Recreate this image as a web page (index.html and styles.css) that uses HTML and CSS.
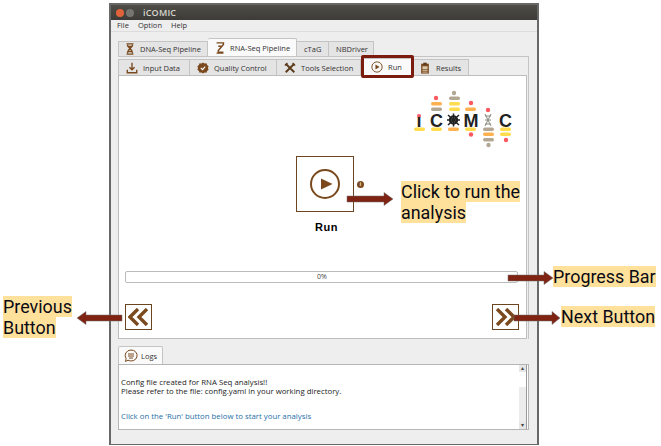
FILE: index.html
```html
<!DOCTYPE html>
<html lang="en">
<head>
    <meta charset="utf-8">
    <title>ICOMIC</title>
    <link rel="stylesheet" href="styles.css">
</head>
<body>
<div class="window">
    <div class="titlebar">
        <span class="dot close"></span>
        <span class="dot min"></span>
        <span class="title">iCOMIC</span>
    </div>
    <div class="menu"><span>File</span><span>Option</span><span>Help</span></div>
    <div class="content">
        <div class="tabs top-tabs">
            <div class="tab dna">
                <svg class="ico" viewBox="0 0 14 14"><path d="M3 1h8M3 13h8M4 2c0 4 6 4 6 10M10 2c0 4-6 4-6 10M5 4h4M5 10h4" fill="none" stroke="#7a4a1e" stroke-width="1.7"/></svg>
                DNA-Seq Pipeline
            </div>
            <div class="tab active rna">
                <svg class="ico" viewBox="0 0 14 14"><path d="M3 1h8v2L5 10v2h6M3 13h8M5 5h5" fill="none" stroke="#7a4a1e" stroke-width="1.7"/></svg>
                RNA-Seq Pipeline
            </div>
            <div class="tab ctag">cTaG</div>
            <div class="tab nbd">NBDriver</div>
        </div>
        <div class="pane">
            <div class="tabs inner-tabs">
                <div class="tab input">
                    <svg class="ico" viewBox="0 0 14 14"><path d="M7 1v8M4 6l3 3 3-3M1.500 9v3.500h11V9" fill="none" stroke="#7a4a1e" stroke-width="1.600"/></svg>
                    Input Data
                </div>
                <div class="tab quality">
                    <svg class="ico" viewBox="0 0 14 14"><path d="M7 .5l1.800 1.200 2.200-.2.800 2 1.700 1.400-.7 2.100.7 2.100-1.700 1.400-.8 2-2.200-.2L7 13.500l-1.800-1.200-2.200.2-.8-2L.5 9.100 1.200 7 .5 4.900l1.700-1.400.8-2 2.200.2z" fill="#7a4a1e"/><path d="M4.500 7l2 2 3-3.500" fill="none" stroke="#fff" stroke-width="1.300"/></svg>
                    Quality Control
                </div>
                <div class="tab tools">
                    <svg class="ico" viewBox="0 0 14 14"><path d="M2 2l10 10M12 2L2 12" fill="none" stroke="#5b3a1a" stroke-width="2.200"/><path d="M1 4l3-3M10 1l3 3" stroke="#5b3a1a" stroke-width="1.500"/></svg>
                    Tools Selection
                </div>
                <div class="tab active run">
                    <svg class="ico" viewBox="0 0 14 14"><circle cx="7" cy="7" r="6" fill="none" stroke="#7a4a1e" stroke-width="1.100"/><path d="M5.200 4.200L10 7l-4.800 2.800z" fill="#7a4a1e"/></svg>
                    Run
                </div>
                <div class="tab results">
                    <svg class="ico" viewBox="0 0 14 14"><rect x="2.500" y="2" width="9" height="11.500" fill="#7a4a1e"/><rect x="5" y=".8" width="4" height="2.500" fill="#5b3a1a"/><rect x="4" y="5" width="6" height="3.500" fill="#d9c7ae"/><path d="M4 10h6M4 11.800h6" stroke="#d9c7ae"/></svg>
                    Results
                </div>
            </div>
            <div class="run-page">
                <div class="logo-row">
                    <svg class="logo" width="108" height="60" viewBox="410 88 108 60">
                        <g fill="#f9595f">
                            <circle cx="419" cy="116" r="2"/><circle cx="436" cy="98" r="2.200"/>
                            <circle cx="471" cy="103" r="2.200"/><circle cx="471" cy="134.500" r="2.200"/>
                            <circle cx="488" cy="110" r="2.200"/><circle cx="506" cy="140" r="2.200"/>
                        </g>
                        <g fill="#b3a794">
                            <circle cx="454" cy="93" r="2.200"/><circle cx="488.500" cy="145" r="2.200"/>
                            <rect x="449" y="96.500" width="11" height="3.500" rx="1.700"/>
                            <rect x="431" y="107.500" width="11" height="3.500" rx="1.700"/>
                            <rect x="483" y="127.500" width="11" height="3.500" rx="1.700"/>
                            <rect x="483" y="138" width="11" height="3.500" rx="1.700"/>
                        </g>
                        <g fill="#ffb14f">
                            <rect x="431" y="102" width="11" height="3.500" rx="1.700"/>
                            <rect x="465" y="107.500" width="11" height="3.500" rx="1.700"/>
                            <rect x="448" y="127.500" width="11" height="3.500" rx="1.700"/>
                            <rect x="483" y="132.500" width="11" height="3.500" rx="1.700"/>
                        </g>
                        <g fill="#ffdc4d">
                            <rect x="414" y="127.500" width="11" height="3.500" rx="1.700"/>
                            <rect x="431" y="127.500" width="11" height="3.500" rx="1.700"/>
                            <rect x="449" y="102" width="11" height="3.500" rx="1.700"/>
                            <rect x="449" y="107.500" width="11" height="3.500" rx="1.700"/>
                            <rect x="465" y="127.500" width="11" height="3.500" rx="1.700"/>
                            <rect x="500" y="127.500" width="11" height="3.500" rx="1.700"/>
                            <rect x="500" y="132.500" width="11" height="3.500" rx="1.700"/>
                        </g>
                        <text class="logo-text" x="419" y="126.500" text-anchor="middle">ı</text>
                        <text class="logo-text" x="436.500" y="126.500" text-anchor="middle">C</text>
                        <text class="logo-text" x="471" y="126.500" text-anchor="middle">M</text>
                        <text class="logo-text" x="505.500" y="126.500" text-anchor="middle">C</text>
                        <circle cx="453.500" cy="120" r="3.600" fill="none" stroke="#222" stroke-width="2.200"/>
                        <path d="M448 115l11 10M459 115l-11 10M453.500 113.500v13M447 120h13" stroke="#222" stroke-width="1.500"/>
                        <path d="M485 114l6 12M491 114l-6 12M485 116h6M485 120h6M485 124h6" fill="none" stroke="#8a8a80" stroke-width="1"/>
                    </svg>
                </div>
                <div class="run-block">
                    <div class="run-col">
                        <div class="run-btn">
                            <svg width="32" height="32" viewBox="0 0 32 32"><circle cx="16" cy="16" r="14" fill="none" stroke="#7a4a1e" stroke-width="2"/><path d="M12 10.500L23.500 16 12 21.500z" fill="#7a4a1e"/></svg>
                        </div>
                        <div class="run-label">Run</div>
                    </div>
                    <span class="info">i</span>
                </div>
                <div class="progress">0%</div>
                <div class="nav-row">
                    <div class="nav-btn">
                        <svg width="21" height="18" viewBox="0 0 21 18"><path d="M10 1L2 9l8 8M19 1l-8 8 8 8" fill="none" stroke="#7a4a1e" stroke-width="3.400"/></svg>
                    </div>
                    <div class="nav-btn">
                        <svg width="21" height="18" viewBox="0 0 21 18"><path d="M2 1l8 8-8 8M11 1l8 8-8 8" fill="none" stroke="#7a4a1e" stroke-width="3.400"/></svg>
                    </div>
                </div>
            </div>
        </div>
        <div class="tabs log-tabs">
            <div class="tab active logs">
                <svg class="ico" viewBox="0 0 14 14"><path d="M7 1a6 5.500 0 1 1-3 10.200L1.500 12.500l.6-3A6 5.500 0 0 1 7 1z" fill="none" stroke="#7a4a1e"/><path d="M4 5h6M4 7h6M5 9h4" stroke="#7a4a1e"/></svg>
                Logs
            </div>
        </div>
        <div class="log-panel">
            <div class="log-text">
                <p>Config file created for RNA Seq analysis!!</p>
                <p>Please refer to the file: config.yaml in your working directory.</p>
                <p class="log-link">Click on the 'Run' button below to start your analysis</p>
            </div>
            <div class="scrollbar">
                <span class="sb-arrow">&#9652;</span>
                <span class="sb-track"></span>
                <span class="sb-arrow">&#9662;</span>
            </div>
        </div>
    </div>
</div>

<!-- annotations drawn over the screenshot -->
<div class="run-mark"></div>
<svg class="arrows" width="661" height="446" viewBox="0 0 661 446">
    <g fill="#7f2412" stroke="#6d6d6d" stroke-width=".5">
        <path d="M347 196h37v-3.500l9 6.500-9 6.500V202h-37z"/>
        <path d="M122 315H86v-3.500L77 318l9 6.500V321h36z"/>
        <path d="M508 275h36v-3.500l9 6.500-9 6.500V281h-36z"/>
        <path d="M514 315h38v-3.500l8 6.500-8 6.500V321h-38z"/>
    </g>
</svg>
<div class="note note-run"><span>Click to run the</span><span>analysis</span></div>
<div class="note note-progress"><span>Progress Bar</span></div>
<div class="note note-prev"><span>Previous</span><span>Button</span></div>
<div class="note note-next"><span>Next Button</span></div>
</body>
</html>
```

FILE: styles.css
```css
* {
    margin: 0;
    padding: 0;
    box-sizing: border-box;
}
html, body {
    height: 100%;
    overflow: hidden;
}
body {
    background-color: #fff;
    font-family: "Open Sans", "Noto Sans", sans-serif;
    color: #333;
}
.window {
    width: 430px;
    height: 442px;
    margin: 3px 0 0 109px;
    border: 2px solid #686868;
    border-bottom-width: 1px;
    background-color: #eee;
    display: flex;
    flex-direction: column;
}
.titlebar {
    height: 15px;
    background: linear-gradient(#4f4d47, #3c3b37);
    display: flex;
    align-items: center;
    padding-left: 5px;
    gap: 2px;
}
.dot {
    width: 8px;
    height: 8px;
    border-radius: 50%;
}
.close {
    background-color: #e0633a;
}
.min {
    background-color: #77756f;
    margin-right: 7px;
}
.title {
    font-size: 9px;
    font-weight: 600;
    color: #d8d5cd;
    letter-spacing: .2px;
}
.menu {
    height: 12px;
    display: flex;
    gap: 9px;
    padding-left: 6px;
    font-size: 7.500px;
    line-height: 11px;
    color: #333;
    border-bottom: 1px solid #dcdcdc;
}
.content {
    flex: 1;
    padding: 6px 8px 0 7px;
    display: flex;
    flex-direction: column;
}
.tabs {
    display: flex;
}
.top-tabs {
    height: 18px;
    align-items: flex-end;
}
.tab {
    height: 15px;
    display: flex;
    align-items: center;
    gap: 5px;
    font-size: 7.500px;
    color: #333;
    background-color: #e4e4e4;
    border: 1px solid #c4c4c4;
    border-bottom: 0;
    border-left: 0;
    white-space: nowrap;
    padding-left: 7px;
}
.tab.active {
    background-color: #fafafa;
    border-radius: 2px 2px 0 0;
}
.ico {
    width: 12px;
    height: 12px;
    flex: none;
}
.dna {
    width: 90px;
    border-left: 1px solid #c4c4c4;
    padding-left: 5px;
    gap: 4px;
}
.rna {
    width: 89px;
    height: 18px;
    padding-left: 6px;
    gap: 4px;
}
.ctag {
    width: 32px;
}
.nbd {
    width: 45px;
    padding-left: 7px;
}
.pane {
    height: 283px;
    border: 1px solid #c4c4c4;
    border-bottom: 0;
    border-left: 0;
    padding-top: 1px;
    padding-right: 1px;
    display: flex;
    flex-direction: column;
}
.inner-tabs {
    height: 17px;
    align-items: flex-end;
}
.inner-tabs .tab {
    height: 16px;
}
.input {
    width: 72px;
    border-left: 1px solid #c4c4c4;
}
.quality {
    width: 87px;
}
.tools {
    width: 84px;
}
.run {
    width: 53px;
    padding-left: 10px;
}
.inner-tabs .run {
    height: 17px;
}
.results {
    width: 55px;
    padding-left: 5px;
}
.run-page {
    flex: 1;
    background-color: #fff;
    border: 1px solid #bdbdbd;
    padding: 12px 8px 0 6px;
    display: flex;
    flex-direction: column;
}
.logo-row {
    display: flex;
    justify-content: flex-end;
    height: 60px;
}
.logo-text {
    font-family: "Liberation Sans", sans-serif;
    font-size: 18px;
    font-weight: 700;
    fill: #222;
}
.run-block {
    display: flex;
    margin: 8px 0 0 171px;
}
.run-col {
    width: 58px;
}
.run-btn {
    width: 58px;
    height: 56px;
    border: 1px solid #6b4420;
    display: flex;
    align-items: center;
    justify-content: center;
}
.run-label {
    margin-top: 8px;
    height: 14px;
    padding-left: 3px;
    font-family: "Liberation Sans", sans-serif;
    font-size: 11px;
    font-weight: 700;
    letter-spacing: .6px;
    line-height: 14px;
    text-align: center;
    color: #000;
}
.info {
    width: 7px;
    height: 7px;
    margin: 25px 0 0 3px;
    border-radius: 50%;
    background-color: #7a4a1e;
    color: #e8d8c4;
    font-size: 6px;
    font-weight: 700;
    line-height: 7px;
    text-align: center;
}
.progress {
    height: 12px;
    margin-top: 37px;
    border: 1px solid #bbb;
    border-radius: 2px;
    padding-left: 1px;
    font-size: 7px;
    line-height: 10px;
    text-align: center;
    color: #444;
}
.nav-row {
    display: flex;
    justify-content: space-between;
    margin: 21px -1px 0 0;
}
.nav-btn {
    width: 27px;
    height: 26px;
    border: 1px solid #6b4420;
    display: flex;
    align-items: center;
    justify-content: center;
}
.log-tabs {
    height: 18px;
    margin-top: 7px;
}
.logs {
    width: 45px;
    height: 18px;
    border-left: 1px solid #c4c4c4;
    padding-left: 5px;
    gap: 3px;
}
.logs .ico {
    width: 14px;
    height: 14px;
}
.log-panel {
    height: 66px;
    background-color: #fff;
    border: 1px solid #b5b5b5;
    display: flex;
    justify-content: space-between;
}
.log-text {
    padding: 13px 0 0 2px;
    font-size: 7.800px;
    line-height: 8.500px;
    color: #222;
}
.log-link {
    margin-top: 17px;
    color: #1f6fa8;
}
.scrollbar {
    width: 8px;
    margin-right: 1px;
    display: flex;
    flex-direction: column;
    border-right: 1px solid #999;
}
.sb-arrow {
    height: 7px;
    font-size: 6px;
    line-height: 7px;
    text-align: center;
    background-color: #e6e6e6;
    color: #444;
}
.sb-track {
    flex: 1;
    margin-top: 15px;
    background-color: #ececec;
}
.run-mark {
    position: absolute;
    left: 361px;
    top: 55px;
    width: 53px;
    height: 23px;
    border: 3px solid #7b1c0e;
    border-radius: 2px;
}
.arrows {
    position: absolute;
    left: 0;
    top: 0;
}
.note {
    position: absolute;
    display: flex;
    flex-direction: column;
    align-items: flex-start;
    font-family: Roboto, sans-serif;
    font-size: 17.900px;
    line-height: 21px;
    color: #0a0a14;
}
.note span {
    background-color: #ffe19b;
    white-space: nowrap;
}
.note-run {
    left: 401px;
    top: 181px;
}
.note-progress {
    left: 553px;
    top: 266px;
}
.note-prev {
    left: 3px;
    top: 296px;
}
.note-next {
    left: 561px;
    top: 306px;
}
```
